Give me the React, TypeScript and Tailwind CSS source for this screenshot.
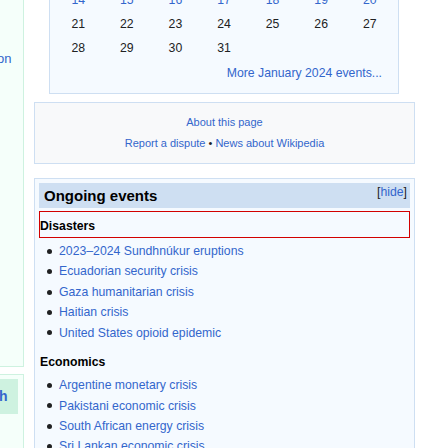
const days = [
  ["14", "15", "16", "17", "18", "19", "20"],
  ["21", "22", "23", "24", "25", "26", "27"],
  ["28", "29", "30", "31", "", "", ""],
];

const disasters = [
  "2023–2024 Sundhnúkur eruptions",
  "Ecuadorian security crisis",
  "Gaza humanitarian crisis",
  "Haitian crisis",
  "United States opioid epidemic",
];

const economics = [
  "Argentine monetary crisis",
  "Pakistani economic crisis",
  "South African energy crisis",
  "Sri Lankan economic crisis",
];

function Bullets({ items }: { items: string[] }) {
  return (
    <ul>
      {items.map((t) => (
        <li key={t} className="flex items-center leading-[20.4px]">
          <span className="ml-[8px] mr-[7px] h-[5px] w-[5px] shrink-0 rounded-full bg-[#202122]" />
          <a className="whitespace-nowrap text-[#3366cc]">{t}</a>
        </li>
      ))}
    </ul>
  );
}

export default function App() {
  return (
    <div className="flex h-[448px] w-[448px] gap-[10px] overflow-hidden bg-white font-['Liberation_Sans',Arial,sans-serif] text-[12.25px] text-[#202122]">
      {/* left column, mostly off screen */}
      <div className="w-[24px] shrink-0">
        <div className="h-[367px] overflow-hidden border-b border-r border-[#cef2e0] bg-[#f5fffa] pt-[50px]">
          <span className="-ml-[3px] block text-[13px] leading-[18px] text-[#3366cc]">on</span>
        </div>
        <div className="mt-[7px] h-[80px] border-r border-t border-[#cef2e0] bg-[#f5fffa] pr-[5px] pt-[4px]">
          <div className="flex h-[35px] items-center overflow-hidden bg-[#cef2e0] text-[14px] font-bold text-[#3366cc]">
            <span className="-ml-[1px]">h</span>
          </div>
        </div>
      </div>

      {/* right column */}
      <div className="-mt-[13px] w-[381px] shrink-0">
        <div className="ml-[15px] mr-[16px] border border-[#cedff2] bg-[#f5faff] pb-[10px]">
          <div className="ml-[4px] w-[340px]">
            {days.map((row, i) => (
              <div key={i} className="grid h-[24px] grid-cols-7 items-center text-center">
                {row.map((d, j) => (
                  <span key={j} className={i === 0 ? "text-[#3366cc]" : "text-[#202122]"}>
                    {d}
                  </span>
                ))}
              </div>
            ))}
          </div>
          <div className="mt-[3px] pr-[16px] text-right leading-[20px] text-[#3366cc]">
            More January 2024 events...
          </div>
        </div>

        <div className="mt-[8px] border border-[#cedff2] bg-[#f8f9fa] pb-[9px] pt-[9px] text-center text-[11px] leading-[21px]">
          <div className="text-[#3366cc]">About this page</div>
          <div>
            <a className="text-[#3366cc]">Report a dispute</a> • <a className="text-[#3366cc]">News about Wikipedia</a>
          </div>
        </div>

        <div className="mt-[14px] border border-[#cedff2] bg-[#f5faff] px-[4px] pt-[4px] pb-[20px]">
          <div className="flex h-[25px] justify-between bg-[#cedff2]">
            <h2 className="pl-[5px] text-[15px] font-bold leading-[25px] text-black">Ongoing events</h2>
            <span className="pr-[3px] leading-[19.6px]">
              [<a className="text-[#3366cc]">hide</a>]
            </span>
          </div>
          <div className="mt-[3px] h-[27px] border border-[#d20000] pt-[5px]">
            <h3 className="font-bold leading-[19px] text-black">Disasters</h3>
          </div>
          <div className="mt-[3px]">
            <Bullets items={disasters} />
          </div>
          <h3 className="ml-[1px] mt-[10px] font-bold leading-[19.6px] text-black">Economics</h3>
          <div className="mt-[2.5px]">
            <Bullets items={economics} />
          </div>
        </div>
      </div>
    </div>
  );
}
